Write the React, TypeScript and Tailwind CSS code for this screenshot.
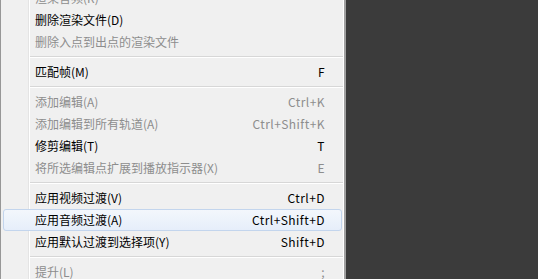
import React from 'react';

type Item =
  | { kind: 'item'; label: string; shortcut?: string; disabled?: boolean; hover?: boolean }
  | { kind: 'sep' };

const items: Item[] = [
  { kind: 'item', label: '渲染音频(R)', disabled: true },
  { kind: 'item', label: '删除渲染文件(D)' },
  { kind: 'item', label: '删除入点到出点的渲染文件', disabled: true },
  { kind: 'sep' },
  { kind: 'item', label: '匹配帧(M)', shortcut: 'F' },
  { kind: 'sep' },
  { kind: 'item', label: '添加编辑(A)', shortcut: 'Ctrl+K', disabled: true },
  { kind: 'item', label: '添加编辑到所有轨道(A)', shortcut: 'Ctrl+Shift+K', disabled: true },
  { kind: 'item', label: '修剪编辑(T)', shortcut: 'T' },
  { kind: 'item', label: '将所选编辑点扩展到播放指示器(X)', shortcut: 'E', disabled: true },
  { kind: 'sep' },
  { kind: 'item', label: '应用视频过渡(V)', shortcut: 'Ctrl+D' },
  { kind: 'item', label: '应用音频过渡(A)', shortcut: 'Ctrl+Shift+D', hover: true },
  { kind: 'item', label: '应用默认过渡到选择项(Y)', shortcut: 'Shift+D' },
  { kind: 'sep' },
  { kind: 'item', label: '提升(L)', shortcut: ';', disabled: true },
];

const MenuRow: React.FC<{ item: Extract<Item, { kind: 'item' }> }> = ({ item }) => (
  <div
    className={`relative z-10 ml-[2px] mr-[1px] flex h-[22px] items-center justify-between rounded-[3px] border pl-[31px] pr-[16px] ${
      item.hover
        ? 'border-[#c3d5ed] bg-gradient-to-b from-[#f3f7fc] to-[#e6eefa]'
        : 'border-transparent'
    } ${item.disabled ? 'text-[#8d8d8d]' : 'text-black'}`}
  >
    <span className="whitespace-nowrap">{item.label}</span>
    {item.shortcut && (
      <span className="whitespace-nowrap tracking-[0.45px]">{item.shortcut}</span>
    )}
  </div>
);

export default function App() {
  return (
    <div
      className="flex h-[279px] w-[538px] overflow-hidden bg-[#3b3b3b] text-[12px] leading-none"
      style={{ fontFamily: '"Noto Sans CJK SC", "Noto Sans", sans-serif' }}
    >
      <div className="flex h-full w-[346px] border-l border-r-2 border-l-[#979797] border-r-[#a0a0a0] bg-[#f0f0f0]">
        <div className="relative flex-1 border-r border-white">
          {/* gutter line */}
          <div className="absolute bottom-0 left-[27px] top-0 w-px bg-[#e4e4e4]" />
          <div className="absolute bottom-0 left-[28px] top-0 w-px bg-white" />
          <div className="mt-[-13px] flex flex-col">
            {items.map((item, i) =>
              item.kind === 'sep' ? (
                <div key={i} className="relative z-10 flex h-[8px] flex-col justify-center pl-[29px]">
                  <div className="h-px bg-[#d7d7d7]" />
                  <div className="h-px bg-white" />
                </div>
              ) : (
                <MenuRow key={i} item={item} />
              )
            )}
          </div>
        </div>
      </div>
    </div>
  );
}
